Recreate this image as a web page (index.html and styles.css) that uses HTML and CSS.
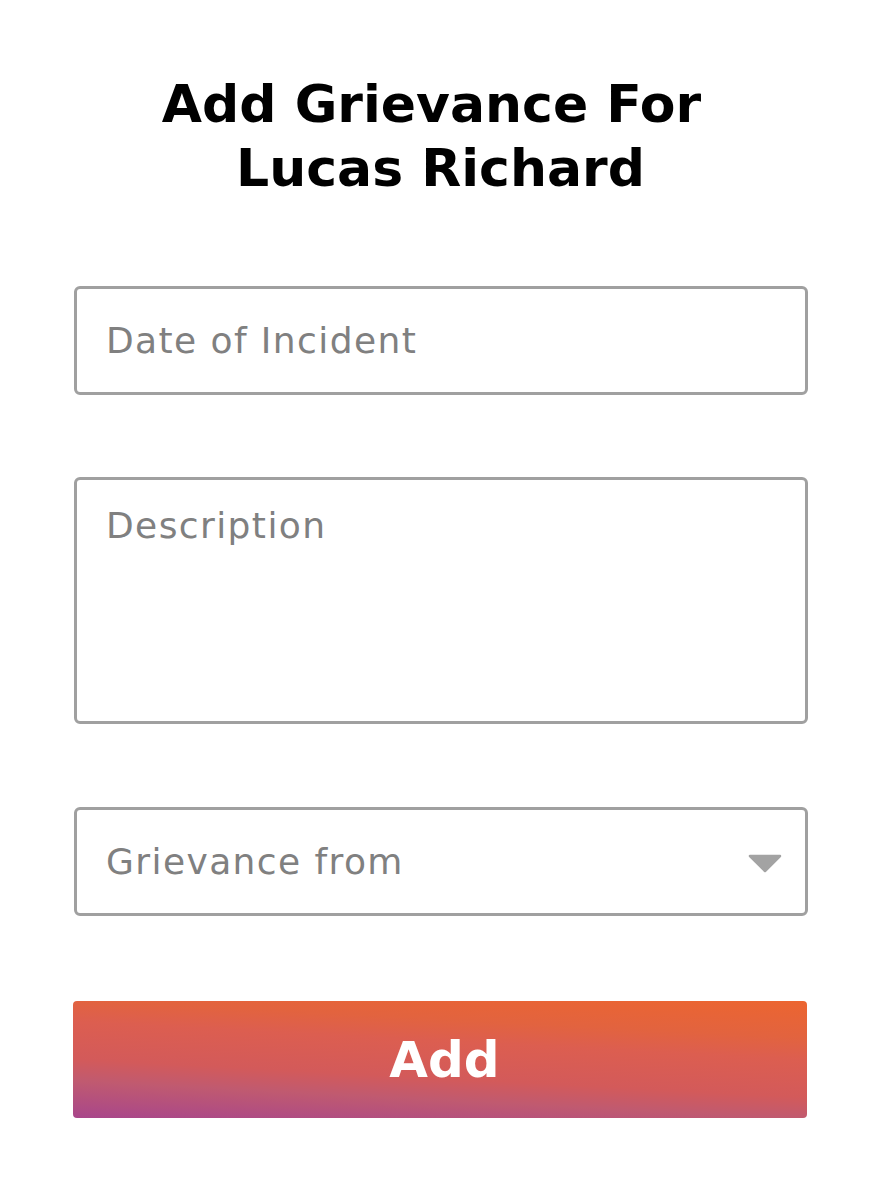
FILE: index.html
```html
<!DOCTYPE html>
<html lang="en">
<head>
<meta charset="utf-8">
<title>Add Grievance</title>
<link rel="stylesheet" href="styles.css">
</head>
<body>
<main class="page">
  <h1 class="title">Add Grievance For&nbsp;<br>Lucas Richard</h1>
  <form class="form">
    <div class="field field-input"><span class="placeholder">Date of Incident</span></div>
    <div class="field field-textarea"><span class="placeholder">Description</span></div>
    <div class="field field-select">
      <span class="placeholder">Grievance from</span>
      <svg class="caret" width="34" height="19" viewBox="0 0 34 19" aria-hidden="true"><path d="M2 2 L32 2 L17 17 Z" fill="#a3a3a3" stroke="#a3a3a3" stroke-width="2.5" stroke-linejoin="round"/></svg>
    </div>
    <button type="button" class="btn">Add</button>
  </form>
</main>
</body>
</html>
```
FILE: styles.css
```css
html, body {
  margin: 0;
  padding: 0;
  background: #ffffff;
}
body {
  font-family: "DejaVu Sans", "Open Sans", sans-serif;
  color: #000;
}
.page {
  width: 735px;
  margin-left: 73px;
  padding-top: 72px;
  display: flex;
  flex-direction: column;
}
.title {
  margin: 0;
  text-align: center;
  font-weight: bold;
  font-size: 52px;
  line-height: 64px;
  letter-spacing: 0;
}
.form {
  display: flex;
  flex-direction: column;
  margin-top: 86px;
}
.field {
  box-sizing: border-box;
  border: 3px solid #a0a0a0;
  border-radius: 6px;
  margin-left: 1px;
  width: 734px;
  display: flex;
  padding-left: 29px;
  padding-right: 23px;
}
.placeholder {
  color: #808080;
  font-size: 36px;
  letter-spacing: 1.4px;
}
.field-input {
  height: 109px;
  align-items: center;
}
.field-textarea {
  margin-top: 82px;
  height: 247px;
  align-items: flex-start;
  padding-top: 25px;
}
.field-select {
  margin-top: 83px;
  height: 109px;
  align-items: center;
  justify-content: space-between;
}
.caret {
  display: block;
  margin-top: 4px;
}
.btn {
  margin-top: 85px;
  width: 734px;
  height: 117px;
  border: 0;
  border-radius: 4px;
  background: linear-gradient(3deg, #a8468b 0%, #c05a70 24%, #d35a5a 38%, #dc5e50 62%, #e2633f 76%, #ec6530 100%);
  color: #fff;
  font-family: "DejaVu Sans", "Open Sans", sans-serif;
  font-weight: bold;
  font-size: 50px;
  padding: 0 0 0 9px;
  cursor: pointer;
}
```
